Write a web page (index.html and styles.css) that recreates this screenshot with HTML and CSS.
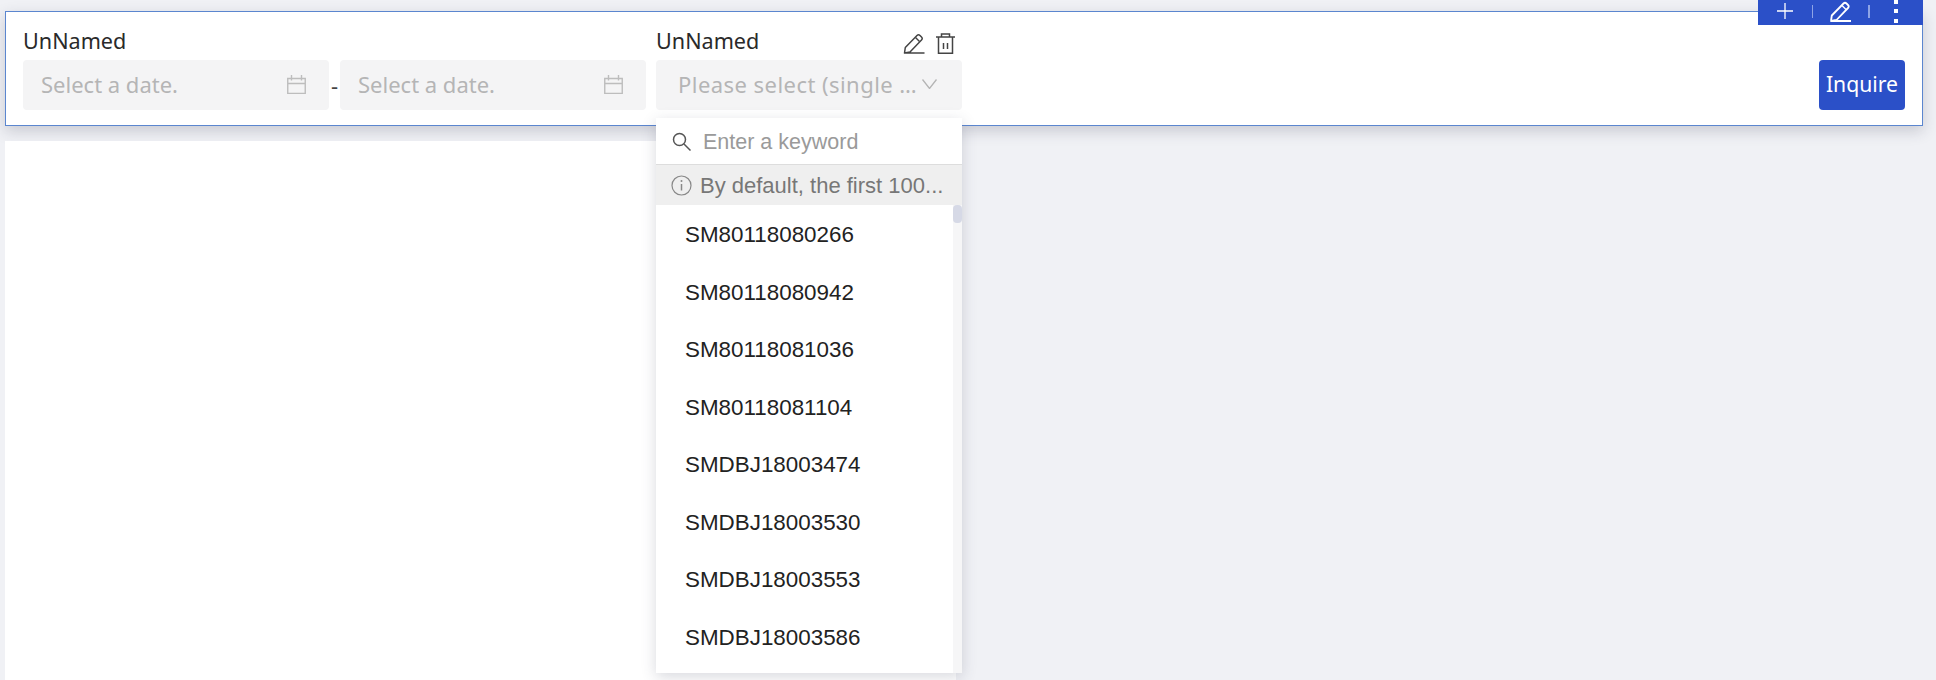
FILE: index.html
```html
<!DOCTYPE html>
<html lang="en">
<head>
<meta charset="utf-8">
<title>Filter</title>
<link rel="stylesheet" href="styles.css">
</head>
<body>
<div class="page">
  <section class="filter">
    <div class="toolbar">
      <svg class="tool-plus" width="16" height="16" viewBox="0 0 16 16"><path d="M8 0v16M0 8h16" fill="none" stroke="#fff" stroke-width="1.300"/></svg>
      <span class="tool-sep"></span>
      <svg class="tool-pen" width="21" height="21" viewBox="0 0 21 21"><path d="M1 20 1.800 14.500 13.500 2.500Q15 1 16.500 2.500L18 4Q19.500 5.500 18 7L6.500 19 1 20H21" fill="none" stroke="#fff" stroke-width="1.800" stroke-linejoin="round"/><path d="M12 4.500 16 8.500" stroke="#fff" stroke-width="1.500"/></svg>
      <span class="tool-sep tool-sep-last"></span>
      <span class="tool-dots"><i></i><i></i><i></i></span>
    </div>
    <div class="field">
      <div class="label-row"><span class="label">UnNamed</span></div>
      <div class="range">
        <div class="input date"><span class="ph date-ph">Select a date.</span>
          <svg width="19" height="19" viewBox="0 0 19 19"><path d="M.750 3.500h17.500v15H.750zM.750 8.500h17.500M4.500 0v5.500M14.500 0v5.500" fill="none" stroke="#bdbdbd" stroke-width="1.400"/></svg>
        </div>
        <span class="dash">-</span>
        <div class="input date"><span class="ph date-ph">Select a date.</span>
          <svg width="19" height="19" viewBox="0 0 19 19"><path d="M.750 3.500h17.500v15H.750zM.750 8.500h17.500M4.500 0v5.500M14.500 0v5.500" fill="none" stroke="#bdbdbd" stroke-width="1.400"/></svg>
        </div>
      </div>
    </div>
    <div class="field select-field">
      <div class="label-row"><span class="label">UnNamed</span>
        <span class="field-tools">
          <svg width="22" height="21" viewBox="0 0 21 21"><path d="M1 20 1.800 14.500 13.500 2.500Q15 1 16.500 2.500L18 4Q19.500 5.500 18 7L6.500 19 1 20H21" fill="none" stroke="#444" stroke-width="1.500" stroke-linejoin="round"/><path d="M12 4.500 16 8.500" stroke="#444" stroke-width="1.400"/></svg>
          <svg width="19" height="21" viewBox="0 0 19 21"><path d="M0 4h19M5.500 4V1h8v3M2.500 4v16.200h14V4M7.500 10v6M11.500 10v6" fill="none" stroke="#444" stroke-width="1.500"/></svg>
        </span>
      </div>
      <div class="input select"><span class="ph select-ph">Please select (single …</span>
        <svg width="15" height="10" viewBox="0 0 15 10"><path d="M.500.500 7.500 9.500 14.500.500" fill="none" stroke="#b4b4b4" stroke-width="1.300"/></svg>
      </div>
      <div class="dropdown">
        <div class="search">
          <svg width="19" height="19" viewBox="0 0 19 19"><circle cx="7.500" cy="7.500" r="6" fill="none" stroke="#555" stroke-width="1.500"/><path d="M12 12 18.500 18.500" stroke="#555" stroke-width="1.500"/></svg>
          <span>Enter a keyword</span>
        </div>
        <div class="notice">
          <svg width="21" height="21" viewBox="0 0 21 21"><circle cx="10.500" cy="10.500" r="9.500" fill="none" stroke="#888" stroke-width="1.200"/><path d="M10.500 9v6.500" stroke="#888" stroke-width="1.500"/><circle cx="10.500" cy="6" r="1" fill="#888"/></svg>
          <span>By default, the first 100...</span>
        </div>
        <div class="list">
          <ul class="items">
            <li>SM80118080266</li>
            <li>SM80118080942</li>
            <li>SM80118081036</li>
            <li>SM80118081104</li>
            <li>SMDBJ18003474</li>
            <li>SMDBJ18003530</li>
            <li>SMDBJ18003553</li>
            <li>SMDBJ18003586</li>
          </ul>
          <div class="scrollbar"><div class="thumb"></div></div>
        </div>
      </div>
    </div>
    <button class="inquire">Inquire</button>
  </section>
  <section class="canvas"></section>
</div>
</body>
</html>
```
FILE: styles.css
```css
* { box-sizing: border-box; }
html, body { margin: 0; padding: 0; }
body { background: #f0f1f5; font-family: "Noto Sans", sans-serif; overflow: hidden; }
.page { height: 680px; padding: 11px 13px 0 5px; overflow: hidden; display: flex; flex-direction: column; }
.filter {
  position: relative;
  height: 115px;
  flex: none;
  background: #fff;
  border: 1px solid #5b86cf;
  box-shadow: 0 5px 14px rgba(40, 45, 70, 0.2);
  padding: 12px 17px 0;
  display: flex;
  align-items: flex-start;
  gap: 10px;
}
.toolbar {
  position: absolute;
  right: -1px;
  top: -12px;
  width: 165px;
  height: 25px;
  background: #2b50c8;
  display: flex;
  align-items: center;
  padding: 0 0 3px 19px;
  overflow: hidden;
}
.tool-sep { width: 1px; height: 13px; background: #8ea4e6; margin-left: 19px; }
.tool-pen { margin-left: 17px; }
.tool-sep-last { margin-left: 17px; width: 2px; }
.tool-dots { display: flex; flex-direction: column; gap: 5.500px; margin-left: 24px; }
.tool-dots i { display: block; width: 4px; height: 4px; background: #fff; }
.field { flex: none; }
.label-row { display: flex; justify-content: space-between; align-items: flex-start; height: 36px; }
.label { font-size: 21.600px; color: #2a2a2a; line-height: 34px; }
.range { display: flex; align-items: center; width: 623px; }
.input {
  height: 50px;
  background: #f4f4f5;
  border-radius: 4px;
  display: flex;
  align-items: center;
  justify-content: space-between;
  padding-bottom: 2px;
}
.date { width: 306px; padding-left: 18px; padding-right: 23px; }
.dash { width: 11px; font-size: 22px; color: #444; text-align: center; }
.ph { font-size: 22px; color: #b5b5b5; white-space: nowrap; }
.select-field { position: relative; width: 306px; }
.select { padding-left: 22px; padding-right: 25px; }
.select-ph { letter-spacing: 0.45px; }
.field-tools { display: flex; gap: 11px; margin-right: 7px; margin-top: 9px; }
.dropdown {
  position: absolute;
  left: 0;
  top: 94px;
  z-index: 2;
  width: 306px;
  height: 555px;
  background: #fff;
  box-shadow: 0 4px 14px rgba(60, 65, 90, 0.2);
  font-family: "Liberation Sans", sans-serif;
  display: flex;
  flex-direction: column;
}
.search { height: 47px; flex: none; border-bottom: 1px solid #ddd; display: flex; align-items: center; padding: 2px 0 0 16px; gap: 12px; font-size: 21.500px; color: #9a9a9a; }
.search svg { margin-top: -2px; }
.notice { height: 40px; flex: none; background: #efefef; display: flex; align-items: center; padding: 1px 0 0 15px; gap: 8px; font-size: 22px; color: #777; white-space: nowrap; }
.list { flex: 1; display: flex; min-height: 0; }
.items { list-style: none; margin: 0; padding: 1px 0 0 29px; flex: 1; }
.items li { height: 57.500px; line-height: 57.500px; font-size: 22.400px; color: #222; }
.scrollbar { width: 9px; background: #f6f6f7; flex: none; }
.thumb { height: 18px; width: 9px; background: #d6d9e6; border-radius: 4px; }
.inquire {
  margin-left: auto;
  margin-top: 36px;
  width: 86px;
  height: 50px;
  border: 0;
  border-radius: 4px;
  background: #2b50c8;
  color: #fff;
  font-family: "Noto Sans", sans-serif;
  font-size: 21.200px;
  padding: 0 0 3px;
}
.canvas { flex: 1; position: relative; z-index: 1; margin-top: 15px; width: 951px; background: #fff; }
```
